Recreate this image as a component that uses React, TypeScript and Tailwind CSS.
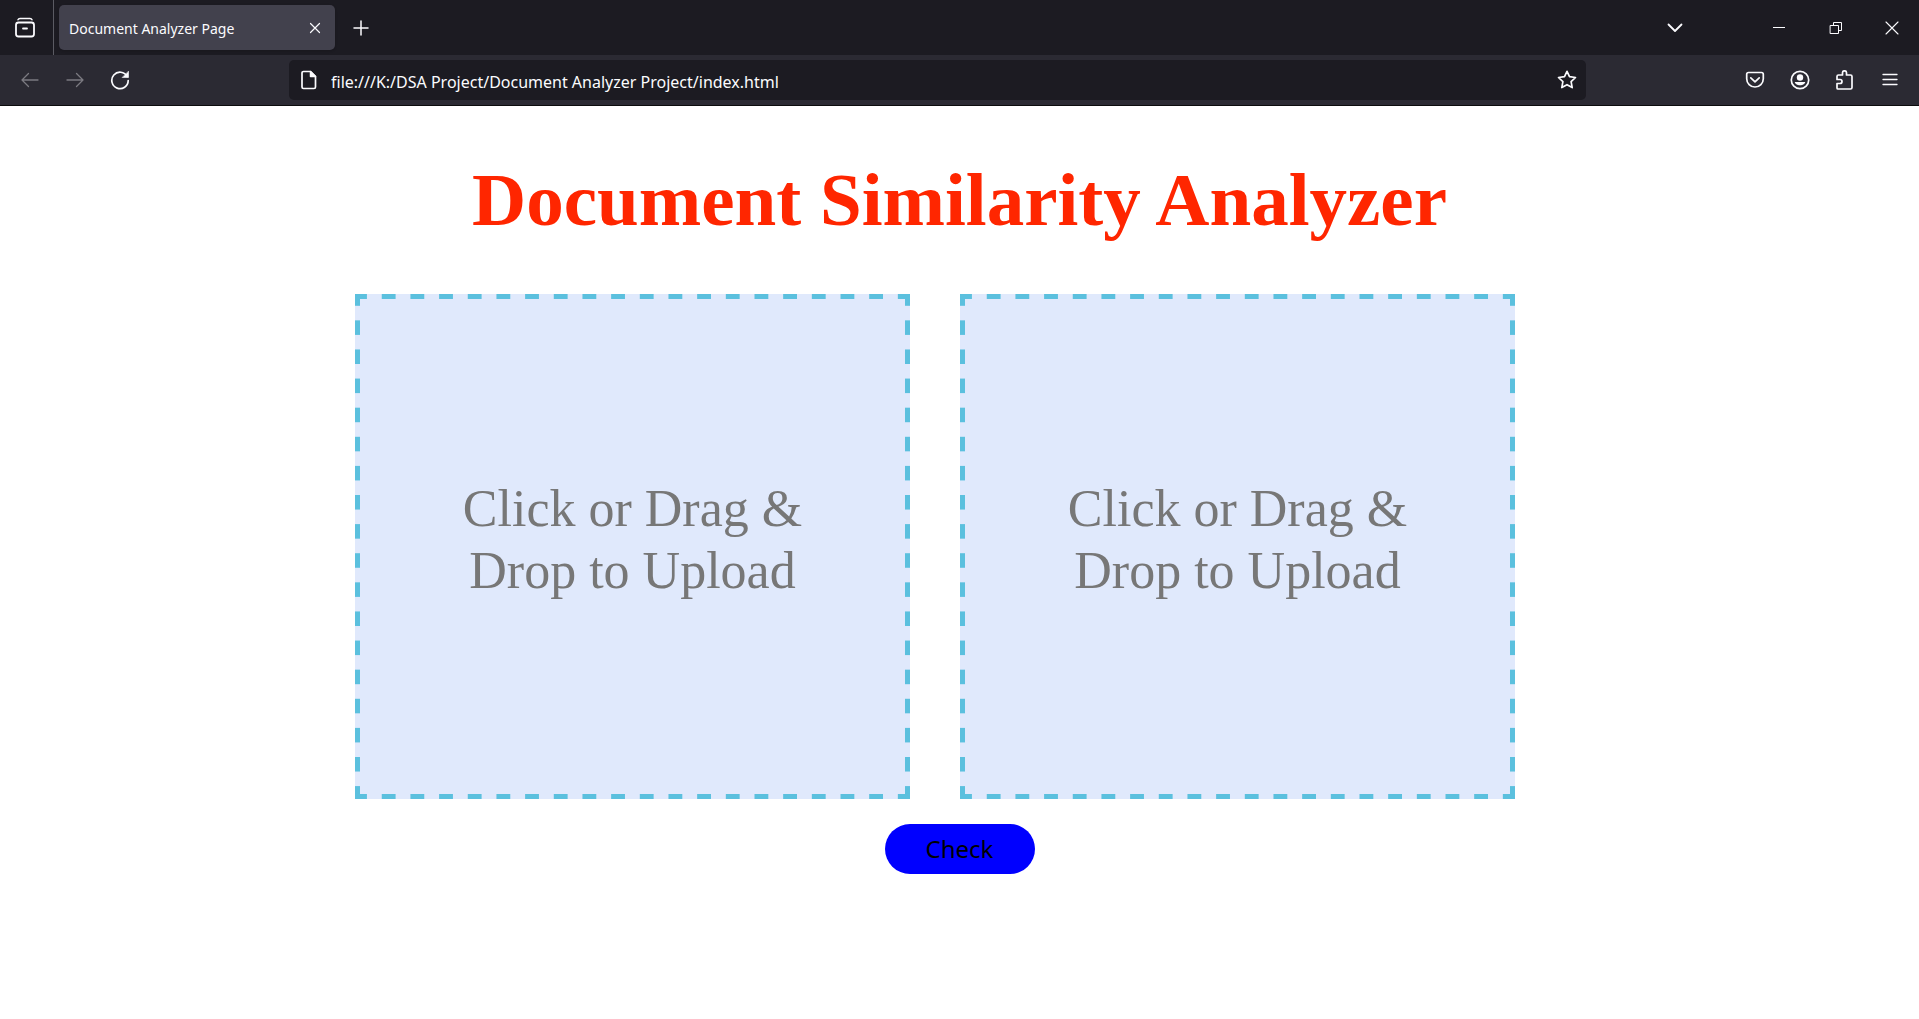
import type { ReactNode } from "react";

const dashes =
  "border-[5px] border-transparent bg-[#e0e9fc] [background-origin:padding-box] [background-clip:border-box] " +
  "[background-image:linear-gradient(90deg,#5bc0de_25%,transparent_25%,transparent_75%,#5bc0de_75%),linear-gradient(90deg,#5bc0de_25%,transparent_25%,transparent_75%,#5bc0de_75%),linear-gradient(#5bc0de_25%,transparent_25%,transparent_75%,#5bc0de_75%),linear-gradient(#5bc0de_25%,transparent_25%,transparent_75%,#5bc0de_75%)] " +
  "[background-size:29px_5px,29px_5px,5px_29px,5px_29px] " +
  "[background-position:0_-5px,0_calc(100%+5px),-5px_0,calc(100%+5px)_0] " +
  "[background-repeat:round_no-repeat,round_no-repeat,no-repeat_round,no-repeat_round]";

function Icon({ size = "size-5", box = "0 0 20 20", children }: { size?: string; box?: string; children: ReactNode }) {
  return (
    <svg viewBox={box} className={size} fill="none" stroke="currentColor" strokeWidth="1.5" strokeLinecap="round" strokeLinejoin="round" aria-hidden="true">
      {children}
    </svg>
  );
}

function IconButton({ label, className = "w-[45px]", children }: { label: string; className?: string; children: ReactNode }) {
  return (
    <button type="button" aria-label={label} className={`flex h-10 shrink-0 items-center justify-center ${className}`}>
      {children}
    </button>
  );
}

function TabBar() {
  return (
    <div className="flex h-[55px] items-center bg-[#1c1b22]">
      <div className="flex h-full w-[54px] items-center border-r border-[#5b5b63] pl-[5px]">
        <IconButton label="Firefox View" className="w-10">
          <Icon size="size-[22px]" box="0 0 22 22">
            <path d="M4 2.7Q4.500 1.500 6 1.500H16Q17.500 1.500 18 2.700" />
            <rect x="2" y="5.500" width="18" height="14" rx="2.500" strokeWidth="1.800" />
            <path d="M9 11.500h4" strokeWidth="1.800" />
          </Icon>
        </IconButton>
      </div>
      <div className="ml-[5px] flex h-[45px] w-[276px] items-center justify-between rounded-[5px] bg-[#42414d] pl-2.5 shadow">
        <span className="pt-0.5 text-sm">Document Analyzer Page</span>
        <IconButton label="Close tab" className="w-10">
          <Icon>
            <path d="M5.500 5.500l9 9m0-9l-9 9" strokeWidth="1.200" />
          </Icon>
        </IconButton>
      </div>
      <IconButton label="New tab" className="ml-1.5 w-10">
        <Icon>
          <path d="M10 3v14M3 10h14" />
        </Icon>
      </IconButton>
      <div className="flex-1" />
      <IconButton label="List all tabs" className="mr-[55px] w-10">
        <Icon>
          <path d="M3.500 6.500l6.500 6.500 6.500-6.500" strokeWidth="1.800" />
        </Icon>
      </IconButton>
      <IconButton label="Minimize" className="w-[57px]">
        <Icon>
          <path d="M4 9.500h12" strokeWidth="1" strokeLinecap="butt" />
        </Icon>
      </IconButton>
      <IconButton label="Restore" className="w-[57px]">
        <Icon>
          <path d="M4.500 7.500h8v8h-8zM7.500 7.500v-3h8v8h-3" strokeWidth="1" strokeLinejoin="miter" />
        </Icon>
      </IconButton>
      <IconButton label="Close" className="w-[55px]">
        <Icon>
          <path d="M4 4l12 12M16 4L4 16" strokeWidth="1.100" />
        </Icon>
      </IconButton>
    </div>
  );
}

function NavBar() {
  return (
    <div className="flex h-[51px] items-center border-b border-[#0c0c0d] bg-[#2b2a33] px-[7px]">
      <IconButton label="Back" className="w-[45px] text-[#7b7a81]">
        <Icon>
          <path d="M18 10H2M8.500 3.500L2 10l6.500 6.500" strokeWidth="1.300" />
        </Icon>
      </IconButton>
      <IconButton label="Forward" className="w-[45px] text-[#7b7a81]">
        <Icon>
          <path d="M2 10h16M11.500 3.500L18 10l-6.500 6.500" strokeWidth="1.300" />
        </Icon>
      </IconButton>
      <IconButton label="Reload">
        <Icon>
          <path d="M17.200 6.500A8.200 8.200 0 1 0 18.200 10.500" strokeWidth="1.700" />
          <path d="M18.500 1.500v6h-6z" fill="currentColor" strokeWidth="0.600" />
        </Icon>
      </IconButton>
      <div className="mr-[146px] ml-[147px] flex h-10 flex-1 items-center rounded-[5px] bg-[#1c1b22] pl-2.5">
        <Icon>
          <path d="M4.500 1.500h7l5 5v10.500a1.500 1.500 0 0 1-1.500 1.500H4.500a1.500 1.500 0 0 1-1.500-1.500V3a1.500 1.500 0 0 1 1.500-1.500z" strokeWidth="1.700" />
          <path d="M11.500 1.500v5h5z" fill="currentColor" />
        </Icon>
        <input
          type="text"
          aria-label="Address"
          defaultValue="file:///K:/DSA Project/Document Analyzer Project/index.html"
          className="ml-3 h-10 min-w-0 flex-1 bg-transparent pt-1 text-base outline-none"
        />
        <IconButton label="Bookmark this page" className="w-[38px]">
          <Icon>
            <path d="M10 1.300l2.500 5.400 6 .8-4.400 4.100 1.100 6-5.200-2.900-5.200 2.900 1.100-6L1.500 7.500l6-.8z" strokeWidth="1.700" />
          </Icon>
        </IconButton>
      </div>
      <IconButton label="Save to Pocket">
        <Icon>
          <path d="M3.500 2.500h13a1.800 1.800 0 0 1 1.800 1.800v4.400a8.300 8.300 0 0 1-16.600 0V4.300a1.800 1.800 0 0 1 1.800-1.800z" strokeWidth="1.700" />
          <path d="M5.800 7.800l4.200 4 4.200-4" strokeWidth="1.700" />
        </Icon>
      </IconButton>
      <IconButton label="Account">
        <Icon>
          <circle cx="10" cy="10" r="8.700" strokeWidth="1.700" />
          <circle cx="10" cy="7.500" r="3.200" fill="currentColor" stroke="none" />
          <path d="M4.800 12h10.400c0 1.800-2.500 3.300-5.200 3.300S4.800 13.800 4.800 12z" fill="currentColor" stroke="none" />
        </Icon>
      </IconButton>
      <IconButton label="Extensions">
        <Icon>
          <path d="M3 19h12.500a1.500 1.500 0 0 0 1.500-1.500V6.500a1.500 1.500 0 0 0-1.500-1.500H11.500V2.800a2 2 0 0 0-4 0V5H3.500A1.500 1.500 0 0 0 2 6.500V9.500h3a2 2 0 0 1 0 4H2v4.500a1 1 0 0 0 1 1z" strokeWidth="1.700" />
        </Icon>
      </IconButton>
      <IconButton label="Menu">
        <Icon>
          <path d="M3 4.500h14M3 9.500h14M3 14.500h14" strokeWidth="1.300" />
        </Icon>
      </IconButton>
    </div>
  );
}

function DropZone({ id }: { id: string }) {
  return (
    <label
      htmlFor={id}
      className={`mr-[50px] flex h-[505px] w-[555px] cursor-pointer items-center justify-center text-center text-[52px] leading-[62px] text-[#777777] ${dashes}`}
    >
      <span className="w-[400px] pb-3.5">Click or Drag &amp; Drop to Upload</span>
      <input id={id} type="file" className="sr-only" />
    </label>
  );
}

export default function App() {
  return (
    <div className="flex min-h-screen flex-col bg-white">
      <header className="font-['Noto_Sans','Open_Sans',sans-serif] text-[#fbfbfe]">
        <TabBar />
        <NavBar />
      </header>
      <main className="flex flex-col items-center pt-[50px] font-['Liberation_Serif',serif]">
        <h1 className="text-[75px] leading-[88px] font-bold text-[#ff2600]">Document Similarity Analyzer</h1>
        <div className="mt-[50px] flex justify-center pl-px">
          <DropZone id="first-document" />
          <DropZone id="second-document" />
        </div>
        <button type="button" className="mt-[25px] h-[50px] w-[150px] rounded-full bg-[#0000ff] font-['Noto_Sans',sans-serif] text-2xl text-black">
          Check
        </button>
      </main>
    </div>
  );
}
